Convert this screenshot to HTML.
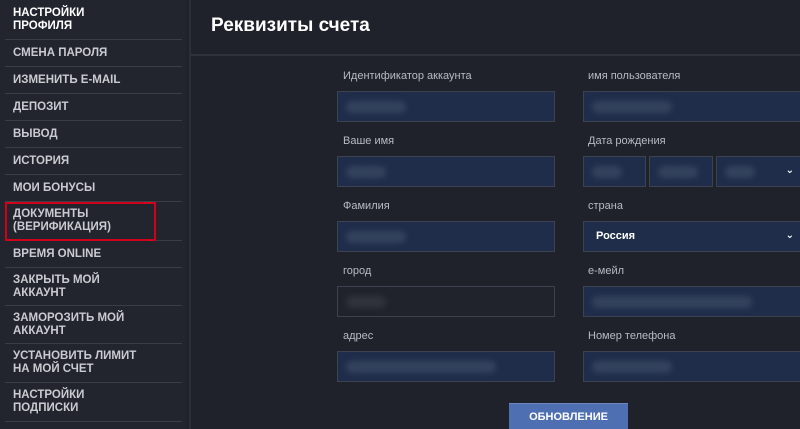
<!DOCTYPE html>
<html><head><meta charset="utf-8"><style>
*{margin:0;padding:0;box-sizing:border-box}
html,body{width:800px;height:429px;overflow:hidden}
body{background:#1f222b;font-family:"Liberation Sans","DejaVu Sans",sans-serif;position:relative}
.side{position:absolute;left:0;top:0;width:186px;height:429px;background:#22252e}
.it{position:absolute;left:5px;width:177px;border-bottom:1px solid #3a3d46;color:#c9cbd0;font-size:11.5px;font-weight:bold;padding-left:8px;line-height:13px;display:flex;align-items:center}
.vline{position:absolute;left:189px;top:0;width:2px;height:429px;background:#2c2f38}
.head{position:absolute;left:191px;top:0;right:0;height:56px;border-bottom:2px solid #2e313a;background:#1f222b}
.head h1{position:absolute;left:20px;top:15px;color:#fff;font-size:19px;font-weight:bold}
.lb{position:absolute;color:#b8bbc2;font-size:11px}
.in{position:absolute;height:31px;background:#1f2d4a;border:1px solid #3d4250}
.blur{position:absolute;top:9px;height:12px;background:#34425d;border-radius:6px;filter:blur(3px)}
.chev{position:absolute;right:8px;top:8px;color:#fff;font-size:10px;font-weight:bold}
.btn{position:absolute;left:509px;top:403px;width:119px;height:30px;background:#4f6fb3;border-top:1px solid #6c86c0;color:#fff;font-size:11px;font-weight:bold;text-align:center;line-height:26px}
</style></head><body>
<div class="side">
<div class="it" style="top:0;height:40px;color:#fff">НАСТРОЙКИ<br>ПРОФИЛЯ</div>
<div class="it" style="top:40px;height:27px">СМЕНА ПАРОЛЯ</div>
<div class="it" style="top:67px;height:27px">ИЗМЕНИТЬ E-MAIL</div>
<div class="it" style="top:94px;height:27px">ДЕПОЗИТ</div>
<div class="it" style="top:121px;height:27px">ВЫВОД</div>
<div class="it" style="top:148px;height:27px">ИСТОРИЯ</div>
<div class="it" style="top:175px;height:27px">МОИ БОНУСЫ</div>
<div class="it" style="top:202px;height:39px">ДОКУМЕНТЫ<br>(ВЕРИФИКАЦИЯ)</div>
<div class="it" style="top:241px;height:27px">ВРЕМЯ ONLINE</div>
<div class="it" style="top:268px;height:38px">ЗАКРЫТЬ МОЙ<br>АККАУНТ</div>
<div class="it" style="top:306px;height:38px">ЗАМОРОЗИТЬ МОЙ<br>АККАУНТ</div>
<div class="it" style="top:344px;height:39px">УСТАНОВИТЬ ЛИМИТ<br>НА МОЙ СЧЕТ</div>
<div class="it" style="top:383px;height:39px">НАСТРОЙКИ<br>ПОДПИСКИ</div>
<div style="position:absolute;left:5px;top:202px;width:151px;height:39px;border:2px solid #d0021b"></div>
</div>
<div class="vline"></div>
<div class="head"><h1>Реквизиты счета</h1></div>

<div class="lb" style="left:343px;top:70px">Идентификатор аккаунта</div>
<div class="lb" style="left:588px;top:70px">имя пользователя</div>
<div class="in" style="left:337px;top:91px;width:218px"><div class="blur" style="left:8px;width:60px"></div></div>
<div class="in" style="left:583px;top:91px;width:220px"><div class="blur" style="left:8px;width:80px"></div></div>

<div class="lb" style="left:343px;top:135px">Ваше имя</div>
<div class="lb" style="left:588px;top:135px">Дата рождения</div>
<div class="in" style="left:337px;top:156px;width:218px"><div class="blur" style="left:8px;width:40px"></div></div>
<div class="in" style="left:583px;top:156px;width:63px"><div class="blur" style="left:8px;width:30px"></div></div>
<div class="in" style="left:649px;top:156px;width:64px"><div class="blur" style="left:8px;width:40px"></div></div>
<div class="in" style="left:716px;top:156px;width:87px"><div class="blur" style="left:8px;width:30px"></div><span class="chev">⌄</span></div>

<div class="lb" style="left:343px;top:200px">Фамилия</div>
<div class="lb" style="left:588px;top:200px">страна</div>
<div class="in" style="left:337px;top:221px;width:218px"><div class="blur" style="left:8px;width:60px"></div></div>
<div class="in" style="left:583px;top:221px;width:220px"><span style="position:absolute;left:12px;top:8px;color:#fff;font-size:11px;font-weight:bold">Россия</span><span class="chev">⌄</span></div>

<div class="lb" style="left:343px;top:265px">город</div>
<div class="lb" style="left:588px;top:265px">е-мейл</div>
<div class="in" style="left:337px;top:286px;width:218px;background:#20232c"><div class="blur" style="left:8px;width:40px;background:#30333b"></div></div>
<div class="in" style="left:583px;top:286px;width:220px"><div class="blur" style="left:8px;width:160px"></div></div>

<div class="lb" style="left:343px;top:330px">адрес</div>
<div class="lb" style="left:588px;top:330px">Номер телефона</div>
<div class="in" style="left:337px;top:351px;width:218px"><div class="blur" style="left:8px;width:150px"></div></div>
<div class="in" style="left:583px;top:351px;width:220px"><div class="blur" style="left:8px;width:80px"></div></div>

<div class="btn">ОБНОВЛЕНИЕ</div>
</body></html>
